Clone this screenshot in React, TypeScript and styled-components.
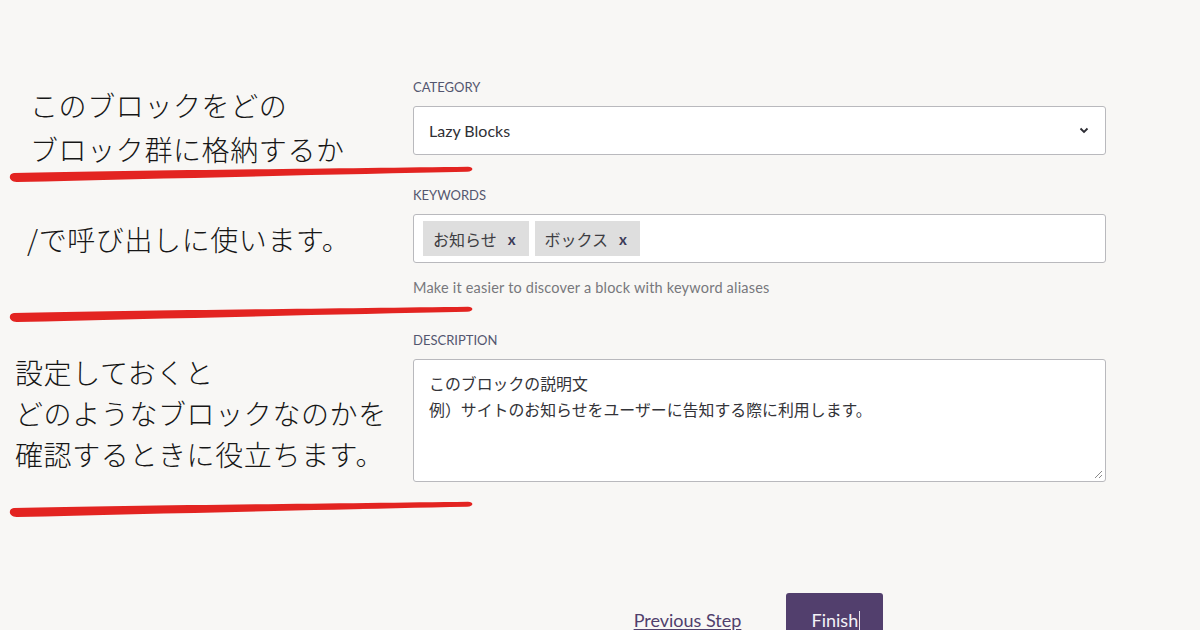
import React from 'react';
import styled, { createGlobalStyle } from 'styled-components';

const GlobalStyle = createGlobalStyle`
  html, body {
    margin: 0;
    padding: 0;
    background: #f8f7f5;
    overflow: hidden;
  }
  * {
    box-sizing: border-box;
  }
`;

const UI_FONT = `Lato, "Noto Sans CJK JP", sans-serif`;
const JP_FONT = `"Noto Sans CJK JP", "Noto Sans", sans-serif`;

const Page = styled.div`
  width: 1200px;
  height: 630px;
  overflow: hidden;
  display: flex;
  align-items: flex-start;
`;

const NotesColumn = styled.div`
  width: 413px;
  flex-shrink: 0;
  display: flex;
  flex-direction: column;
`;

const Note = styled.p<{ $indent: number; $top: number; $lh: number }>`
  margin: ${(p) => p.$top}px 0 0;
  padding-left: ${(p) => p.$indent}px;
  font-family: ${JP_FONT};
  font-weight: 300;
  font-size: 28px;
  letter-spacing: 0.6px;
  line-height: ${(p) => p.$lh}px;
  color: #161616;
  white-space: nowrap;
`;

const Stroke = styled.svg<{ $top: number }>`
  display: block;
  margin: ${(p) => p.$top}px 0 0 8px;
  width: 466px;
  height: 16px;
  overflow: visible;
`;

const FormColumn = styled.div`
  width: 693px;
  flex-shrink: 0;
  padding-top: 78px;
  display: flex;
  flex-direction: column;
  font-family: ${UI_FONT};
`;

const Field = styled.div<{ $gap: number }>`
  margin-bottom: ${(p) => p.$gap}px;
`;

const Label = styled.div`
  font-size: 13px;
  line-height: 18px;
  text-transform: uppercase;
  color: #53566f;
  margin-bottom: 10px;
`;

const Box = styled.div`
  background: #fff;
  border: 1px solid #b9b9bd;
  border-radius: 3px;
`;

const SelectBox = styled(Box)`
  height: 49px;
  display: flex;
  align-items: center;
  justify-content: space-between;
  padding: 0 16px 0 15px;
  font-size: 16px;
  color: #2f2f35;
`;

const TokenBox = styled(Box)`
  height: 49px;
  display: flex;
  align-items: center;
  gap: 6px;
  padding: 0 9px;
`;

const Chip = styled.span`
  height: 35px;
  display: inline-flex;
  align-items: center;
  gap: 11px;
  padding: 0 13px 0 10px;
  background: #dedede;
  font-family: ${JP_FONT};
  font-size: 16px;
  color: #3d3d42;
`;

const ChipRemove = styled.span`
  font-family: ${UI_FONT};
  font-weight: 700;
  font-size: 15px;
  color: #3b3a58;
`;

const Help = styled.div`
  margin-top: 15px;
  font-size: 14.5px;
  letter-spacing: 0.2px;
  line-height: 20px;
  color: #77777c;
`;

const TextArea = styled(Box)`
  position: relative;
  height: 123px;
  padding: 11px 15px;
  font-family: ${JP_FONT};
  font-size: 15.9px;
  line-height: 26px;
  color: #333338;
`;

const Grip = styled.svg`
  position: absolute;
  right: 2px;
  bottom: 2px;
  width: 9px;
  height: 9px;
`;

const Actions = styled.div`
  margin-top: 111px;
  display: flex;
  align-items: flex-start;
  justify-content: center;
  gap: 45px;
  padding-right: 2px;
`;

const BackLink = styled.a`
  font-size: 18px;
  line-height: 22px;
  color: #50406c;
  text-decoration: underline;
  text-underline-offset: 2px;
  margin-top: 16px;
`;

const FinishButton = styled.button`
  width: 97px;
  height: 54px;
  border: none;
  border-radius: 3px;
  background: #523f6d;
  color: #f4f2f7;
  font-family: ${UI_FONT};
  font-size: 18px;
  display: inline-flex;
  align-items: center;
  justify-content: center;
  padding: 0 0 0 2px;
`;

const Caret = styled.span`
  display: inline-block;
  width: 1px;
  height: 22px;
  background: #e8e4ee;
  margin-left: 1px;
  margin-top: 4px;
`;

const Brush: React.FC<{ top: number }> = ({ top }) => (
  <Stroke $top={top} viewBox="0 0 466 16">
    <path
      d="M6 7 C 120 4.5, 330 2.5, 460 0.8 C 466 0.8, 466 5.6, 459 5.8 C 330 8.5, 150 12.5, 9 16 C 0 16.2, 0 7.4, 6 7 Z"
      fill="#e32421"
    />
  </Stroke>
);

const Chevron = () => (
  <svg width="10" height="7" viewBox="0 0 10 7">
    <polyline points="1.5,1.5 5,5 8.5,1.5" fill="none" stroke="#2c2c33" strokeWidth="1.8" />
  </svg>
);

const App: React.FC = () => {
  const keywords = ['お知らせ', 'ボックス'];

  return (
    <>
      <GlobalStyle />
      <Page>
        <NotesColumn>
          <Note $indent={30} $top={83} $lh={44}>
            このブロックをどの
            <br />
            ブロック群に格納するか
          </Note>
          <Brush top={-5} />
          <Note $indent={27} $top={35} $lh={44}>
            /で呼び出しに使います。
          </Note>
          <Brush top={45} />
          <Note $indent={15} $top={30} $lh={41}>
            設定しておくと
            <br />
            どのようなブロックなのかを
            <br />
            確認するときに役立ちます。
          </Note>
          <Brush top={26} />
        </NotesColumn>

        <FormColumn>
          <Field $gap={31}>
            <Label>Category</Label>
            <SelectBox>
              <span>Lazy Blocks</span>
              <Chevron />
            </SelectBox>
          </Field>

          <Field $gap={33}>
            <Label>Keywords</Label>
            <TokenBox>
              {keywords.map((k) => (
                <Chip key={k}>
                  {k}
                  <ChipRemove>x</ChipRemove>
                </Chip>
              ))}
            </TokenBox>
            <Help>Make it easier to discover a block with keyword aliases</Help>
          </Field>

          <Field $gap={0}>
            <Label>Description</Label>
            <TextArea>
              このブロックの説明文
              <br />
              例）サイトのお知らせをユーザーに告知する際に利用します。
              <Grip viewBox="0 0 9 9">
                <line x1="1" y1="8" x2="8" y2="1" stroke="#8a8a8a" strokeWidth="1" />
                <line x1="5" y1="8" x2="8" y2="5" stroke="#8a8a8a" strokeWidth="1" />
              </Grip>
            </TextArea>
          </Field>

          <Actions>
            <BackLink href="#">Previous Step</BackLink>
            <FinishButton>
              Finish
              <Caret />
            </FinishButton>
          </Actions>
        </FormColumn>
      </Page>
    </>
  );
};

export default App;
